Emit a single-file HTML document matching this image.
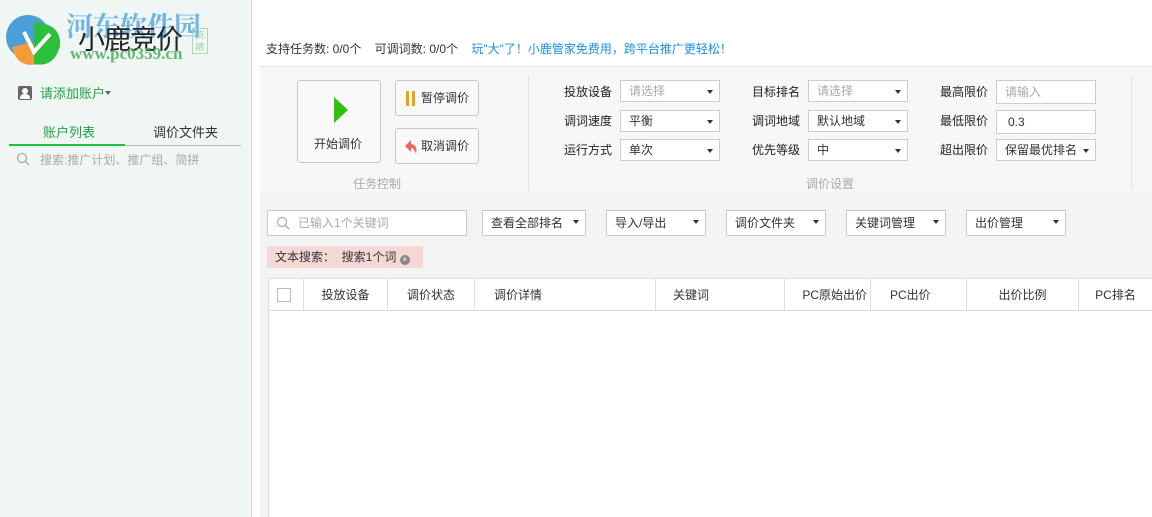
<!DOCTYPE html>
<html><head><meta charset="utf-8"><style>
*{margin:0;padding:0;box-sizing:border-box}
body{width:1152px;height:517px;overflow:hidden;position:relative;background:#fff;font-family:"Liberation Sans","Noto Sans CJK SC",sans-serif;font-size:12px;color:#333;line-height:14px}
.a{position:absolute}
.side{left:0;top:0;width:252px;height:517px;background:#eff6f3;border-right:1px solid #cfd8d4}
.sel,.inp{position:absolute;height:22px;border:1px solid #ccc;background:#fff;padding-left:8px;line-height:20px;font-size:12px}
.sel:after{content:"";position:absolute;right:6px;top:9px;border:3.5px solid transparent;border-top:4px solid #333}
.btn{position:absolute;border:1px solid #c8c8c8;border-radius:3px;background:#f9f9f9}
.lbl{position:absolute;font-size:12px;color:#222;line-height:14px}
.th{position:absolute;top:279px;height:32px;line-height:32px;border-right:1px solid #ddd;font-size:12px;color:#333;text-align:center}
</style></head><body>
<div class="a side">
 <svg class="a" style="left:4px;top:12px" width="62" height="54"><circle cx="24" cy="25" r="22" fill="#4a9fd8"/><path d="M8 35 Q14 60 40 50 L28 30Z" fill="#f29b3a"/><path d="M30 10 Q58 12 56 34 Q50 56 30 52Z" fill="#2bbf3b"/><path d="M20 20 L30 40 L46 22" stroke="#fff" stroke-width="4" fill="none"/></svg>
 <div class="a" style="left:66px;top:10px;font-size:27px;line-height:30px;font-weight:bold;color:#5aa9df;opacity:.85;font-family:'Noto Serif CJK SC',serif">河东软件园</div>
 <div class="a" style="left:78px;top:24px;font-size:27px;line-height:32px;color:#222;letter-spacing:-1px">小鹿竞价</div>
 <div class="a" style="left:192px;top:28px;width:16px;height:26px;border:1px solid #a8dcb0;font-size:9px;color:#9cd3a6;line-height:12px;text-align:center">点睛</div>
 <div class="a" style="left:70px;top:45px;font-size:17px;line-height:18px;font-weight:bold;color:#4cae5b;font-family:'Liberation Serif',serif;opacity:.85">www.pc0359.cn</div>
 <div class="a" style="left:18px;top:86px;width:14px;height:14px;background:#666;border-radius:2px"><div class="a" style="left:4px;top:2px;width:6px;height:6px;background:#fff;border-radius:50%"></div><div class="a" style="left:2px;top:8px;width:10px;height:5px;background:#fff;border-radius:4px 4px 0 0"></div></div>
 <div class="a" style="left:40px;top:86px;font-size:13px;line-height:15px;color:#1ea545">请添加账户</div>
 <div class="a" style="left:105px;top:91px;border:3px solid transparent;border-top:4px solid #666"></div>
 <div class="a" style="left:43px;top:125px;font-size:13px;line-height:15px;color:#1ea545">账户列表</div>
 <div class="a" style="left:153px;top:125px;font-size:13px;line-height:15px;color:#333">调价文件夹</div>
 <div class="a" style="left:9px;top:145px;width:232px;height:1px;background:#bbb"></div>
 <div class="a" style="left:9px;top:144px;width:116px;height:2px;background:#1ec040"></div>
 <svg class="a" style="left:16px;top:152px" width="14" height="14"><circle cx="6" cy="6" r="4.5" stroke="#aaa" stroke-width="1.3" fill="none"/><path d="M9.5 9.5 L13 13" stroke="#aaa" stroke-width="1.4"/></svg>
 <div class="a" style="left:40px;top:153px;font-size:12px;color:#aaa">搜索:推广计划、推广组、简拼</div>
</div>
<div class="a" style="left:266px;top:42px;font-size:12px">支持任务数: 0/0个&nbsp;&nbsp;&nbsp;&nbsp;可调词数: 0/0个&nbsp;&nbsp;&nbsp;&nbsp;<span style="color:#1a8fe8">玩"大"了！小鹿管家免费用，跨平台推广更轻松！</span></div>
<div class="a" style="left:260px;top:66px;width:892px;height:126px;background:#f7f7f7;border-top:1px solid #e8e8e8"></div>
<div class="a" style="left:260px;top:192px;width:892px;height:87px;background:#f3f3f3"></div>
<div class="a" style="left:260px;top:279px;width:8px;height:238px;background:#f3f3f3"></div>
<div class="a" style="left:528px;top:75px;width:1px;height:115px;background:#e3e3e3"></div>
<div class="a" style="left:1131px;top:75px;width:1px;height:115px;background:#e3e3e3"></div>
<div class="btn" style="left:297px;top:80px;width:84px;height:83px"><svg class="a" style="left:35px;top:16px" width="16" height="26"><path d="M1 0 L15 13 L1 26Z" fill="#2ec20e"/></svg><div class="a" style="left:16px;top:56px;font-size:12px">开始调价</div></div>
<div class="btn" style="left:395px;top:80px;width:84px;height:36px"><div class="a" style="left:10px;top:10px;width:3px;height:15px;background:#f5a100"></div><div class="a" style="left:16px;top:10px;width:3px;height:15px;background:#f5a100"></div><div class="a" style="left:25px;top:10px;font-size:12px">暂停调价</div></div>
<div class="btn" style="left:395px;top:128px;width:84px;height:36px"><svg class="a" style="left:8px;top:11px" width="14" height="14"><path d="M1 6 L7 0 L7 4 Q14 5 12 14 Q10 8 7 8 L7 12Z" fill="#f0685a"/></svg><div class="a" style="left:25px;top:10px;font-size:12px">取消调价</div></div>
<div class="a" style="left:353px;top:177px;font-size:12px;color:#aaa">任务控制</div>
<div class="a" style="left:806px;top:177px;font-size:12px;color:#aaa">调价设置</div>
<div class="lbl" style="left:564px;top:85px">投放设备</div><div class="sel" style="left:620px;top:80px;width:100px;color:#aaa">请选择</div>
<div class="lbl" style="left:564px;top:114px">调词速度</div><div class="sel" style="left:620px;top:110px;width:100px">平衡</div>
<div class="lbl" style="left:564px;top:143px">运行方式</div><div class="sel" style="left:620px;top:139px;width:100px">单次</div>
<div class="lbl" style="left:752px;top:85px">目标排名</div><div class="sel" style="left:808px;top:80px;width:100px;color:#aaa">请选择</div>
<div class="lbl" style="left:752px;top:114px">调词地域</div><div class="sel" style="left:808px;top:110px;width:100px">默认地域</div>
<div class="lbl" style="left:752px;top:143px">优先等级</div><div class="sel" style="left:808px;top:139px;width:100px">中</div>
<div class="lbl" style="left:940px;top:85px">最高限价</div><div class="inp" style="left:996px;top:80px;width:100px;color:#aaa;height:24px;line-height:22px">请输入</div>
<div class="lbl" style="left:940px;top:114px">最低限价</div><div class="inp" style="left:996px;top:110px;width:100px;height:24px;padding-left:11px;line-height:22px">0.3</div>
<div class="lbl" style="left:940px;top:143px">超出限价</div><div class="sel" style="left:996px;top:139px;width:100px">保留最优排名</div>
<div class="inp" style="left:267px;top:210px;width:200px;height:26px;line-height:24px;padding-left:30px;color:#aaa">已输入1个关键词<svg class="a" style="left:8px;top:5px" width="14" height="14"><circle cx="6" cy="6" r="4.5" stroke="#aaa" stroke-width="1.2" fill="none"/><path d="M9.5 9.5 L13 13" stroke="#aaa" stroke-width="1.3"/></svg></div>
<div class="sel" style="left:482px;top:210px;width:104px;height:26px;line-height:24px">查看全部排名</div>
<div class="sel" style="left:606px;top:210px;width:100px;height:26px;line-height:24px">导入/导出</div>
<div class="sel" style="left:726px;top:210px;width:100px;height:26px;line-height:24px">调价文件夹</div>
<div class="sel" style="left:846px;top:210px;width:100px;height:26px;line-height:24px">关键词管理</div>
<div class="sel" style="left:966px;top:210px;width:100px;height:26px;line-height:24px">出价管理</div>
<div class="a" style="left:267px;top:246px;width:156px;height:22px;background:#f5d7d5;line-height:22px;padding-left:8px">文本搜索：&nbsp;&nbsp;搜索1个词 <span style="display:inline-block;width:10px;height:10px;border-radius:50%;background:#888;color:#fff;font-size:8px;line-height:10px;text-align:center;vertical-align:-1px">×</span></div>
<div class="a" style="left:268px;top:278px;width:884px;height:239px;background:#fff;border-top:1px solid #ddd;border-left:1px solid #ddd"></div>
<div class="a" style="left:268px;top:310px;width:884px;height:1px;background:#ddd"></div>
<div class="th" style="left:268px;width:36px"><div class="a" style="left:9px;top:9px;width:14px;height:14px;border:1px solid #bbb;background:#fff"></div></div>
<div class="th" style="left:304px;width:84px">投放设备</div>
<div class="th" style="left:388px;width:87px">调价状态</div>
<div class="th" style="left:475px;width:181px;text-align:left;padding-left:19px">调价详情</div>
<div class="th" style="left:656px;width:129px;text-align:left;padding-left:17px">关键词</div>
<div class="th" style="left:785px;width:86px;text-align:right;padding-right:3px">PC原始出价</div>
<div class="th" style="left:871px;width:96px;text-align:left;padding-left:19px">PC出价</div>
<div class="th" style="left:967px;width:112px">出价比例</div>
<div class="th" style="left:1079px;width:73px;border:none">PC排名</div>
</body></html>
